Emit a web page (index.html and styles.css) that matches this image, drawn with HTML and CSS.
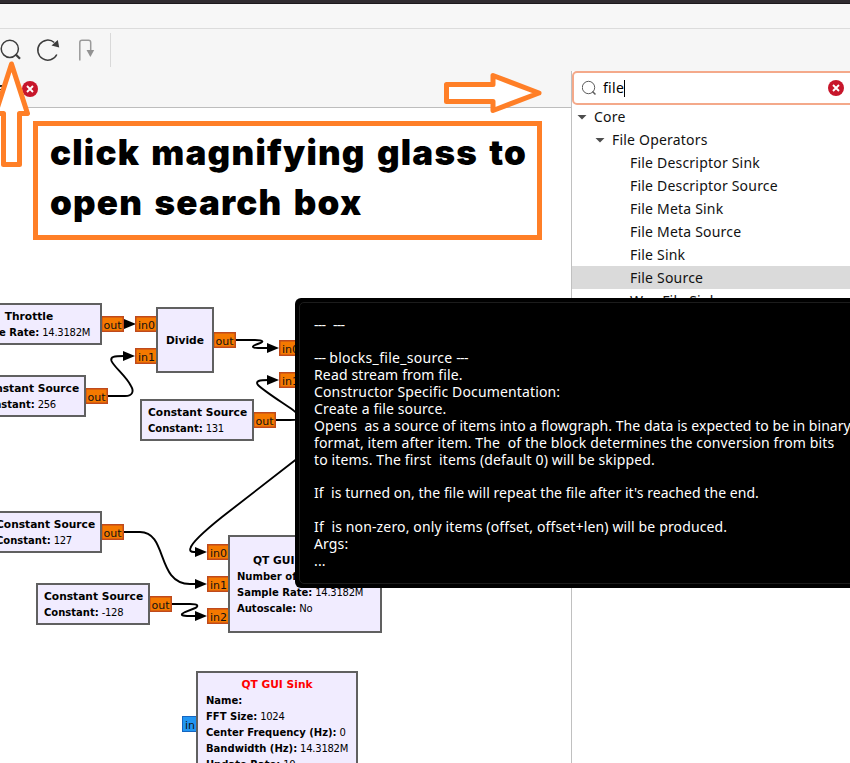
FILE: index.html
```
<!DOCTYPE html>
<html lang="en">
<head>
<meta charset="utf-8">
<title>GNU Radio Companion</title>
<link rel="stylesheet" href="styles.css">
</head>
<body>
<div class="window">
  <div class="titlebar"></div>
  <div class="menubar"></div>
  <div class="toolbar">
    <svg class="tools" width="110" height="42" viewBox="0 29 110 42" fill="none">
      <circle cx="9.8" cy="48.800" r="8.600" stroke="#3d3d3d" stroke-width="1.500"/>
      <path d="M15.500 54.200L20 58.800" stroke="#3d3d3d" stroke-width="2.200"/>
      <path d="M56.800 54.500A10 10 0 1 1 54.300 42.500" stroke="#3d3d3d" stroke-width="1.500"/>
      <path d="M57.800 40L59.200 47.500L51.500 45.500Z" fill="#3d3d3d"/>
      <path d="M79.800 60.500V42.500Q79.800 40.300 82 40.300H88.500Q90.700 40.300 90.700 42.500V52" stroke="#9a9a9a" stroke-width="1.500"/>
      <path d="M86.500 50H94.200L90.400 57Z" fill="#929292"/>
    </svg>
    <div class="separator"></div>
  </div>
  <div class="main">
    <section class="editor">
      <div class="tabs">
        <span class="tab-mark"></span>
        <svg class="close" width="16" height="16" viewBox="0 0 16 16"><circle cx="8" cy="8" r="8" fill="#c7162b"/><path d="M5 5l6 6M11 5l-6 6" stroke="#fff" stroke-width="1.900"/></svg>
      </div>
      <div class="canvas">
        <svg class="wires" width="571" height="655" viewBox="0 108 571 655">
          <g fill="none" stroke="#000" stroke-width="1.900">
            <path d="M124 324H130"/>
            <path d="M108 396H125C133 396 134 391 131 386C126 376 114 367 111.500 361C110 356.500 114 356 124 356"/>
            <path d="M236 340H255C264 340 264 342 259 343.500C251 346 251 348 258 348H269"/>
            <path d="M276 420H290C305 420 300 416 293 410C280 401 264 391 258 385C255 381 259 380 269 380"/>
            <path d="M124 532H140C168 532 156 584 190 584H197"/>
            <path d="M172 604H190C199 604 199 606.500 194 608.500L185 612C179 615 182 616 190 616H197"/>
            <path d="M296 459.500L222 517C202 533 192 543 190.500 548Q189 552 194 552H197"/>
          </g>
          <g fill="#000">
            <path d="M124 319L136 324L124 329Z"/>
            <path d="M123 351L135 356L123 361Z"/>
            <path d="M267 343L279 348L267 353Z"/>
            <path d="M267 375L279 380L267 385Z"/>
            <path d="M195 547L207 552L195 557Z"/>
            <path d="M195 579L207 584L195 589Z"/>
            <path d="M195 611L207 616L195 621Z"/>
          </g>
        </svg>

        <div class="port p1">out</div>
        <div class="port p2">in0</div>
        <div class="port p3">in1</div>
        <div class="port p4">out</div>
        <div class="port p5">out</div>
        <div class="port p6">out</div>
        <div class="port p7">in0</div>
        <div class="port p8">in1</div>
        <div class="port p9">out</div>
        <div class="port p10">in0</div>
        <div class="port p11">in1</div>
        <div class="port p12">in2</div>
        <div class="port p13">out</div>
        <div class="port blue p14">in</div>

        <div class="node throttle"><h3>Throttle</h3><p><b>Sample Rate:</b> 14.3182M</p></div>
        <div class="node c256"><h3>Constant Source</h3><p><b>Constant:</b> 256</p></div>
        <div class="node divide"><h3>Divide</h3></div>
        <div class="node c131"><h3>Constant Source</h3><p><b>Constant:</b> 131</p></div>
        <div class="node c127"><h3>Constant Source</h3><p><b>Constant:</b> 127</p></div>
        <div class="node c128"><h3>Constant Source</h3><p><b>Constant:</b> -128</p></div>
        <div class="node time"><h3>QT GUI Time Sink</h3><p><b>Number of Inputs:</b> 3</p><p><b>Sample Rate:</b> 14.3182M</p><p><b>Autoscale:</b> No</p></div>
        <div class="node sink"><h3>QT GUI Sink</h3><p><b>Name:</b></p><p><b>FFT Size:</b> 1024</p><p><b>Center Frequency (Hz):</b> 0</p><p><b>Bandwidth (Hz):</b> 14.3182M</p><p><b>Update Rate:</b> 10</p></div>
      </div>
    </section>
    <aside class="blocks">
      <div class="search">
        <svg width="16" height="16" viewBox="0 0 16 16" fill="none"><circle cx="6.500" cy="7.500" r="6.200" stroke="#5c5c5c"/><path d="M10.500 11.500l3 3" stroke="#5c5c5c" stroke-width="1.500"/></svg>
        <span class="query">file</span><i class="caret"></i>
        <svg class="clear" width="16" height="16" viewBox="0 0 16 16"><circle cx="8" cy="8" r="8" fill="#c7162b"/><path d="M5 5l6 6M11 5l-6 6" stroke="#fff" stroke-width="1.900"/></svg>
      </div>
      <ul class="tree">
        <li class="l1"><i class="arrow"></i>Core</li>
        <li class="l2"><i class="arrow"></i>File Operators</li>
        <li class="l3">File Descriptor Sink</li>
        <li class="l3">File Descriptor Source</li>
        <li class="l3">File Meta Sink</li>
        <li class="l3">File Meta Source</li>
        <li class="l3">File Sink</li>
        <li class="l3 selected">File Source</li>
        <li class="l3">Wav File Sink</li>
      </ul>
    </aside>
  </div>

  <div class="tooltip"><div class="doc">
    <p><span class="rule">---</span>  <span class="rule">---</span></p>
    <p></p>
    <p><span class="rule">---</span> <span class="name">blocks_file_source</span> <span class="rule">---</span></p>
    <p>Read stream from file.</p>
    <p>Constructor Specific Documentation:</p>
    <p>Create a file source.</p>
    <p class="tight">Opens  as a source of items into a flowgraph. The data is expected to be in binary</p>
    <p>format, item after item. The  of the block determines the conversion from bits</p>
    <p>to items. The first  items (default 0) will be skipped.</p>
    <p></p>
    <p class="tight">If  is turned on, the file will repeat the file after it's reached the end.</p>
    <p></p>
    <p>If  is non-zero, only items (offset, offset+len) will be produced.</p>
    <p>Args:</p>
    <p>...</p>
  </div></div>

  <div class="callout">click magnifying glass to<br>open search box</div>
  <svg class="arrows" width="571" height="200" viewBox="0 0 571 200" fill="#fff" stroke="#ff7f27" stroke-width="5" stroke-linejoin="round">
    <path d="M11.500 64L27.500 113.500H19.500V164.500H3.500V113.500H-4.500Z"/>
    <path d="M446.500 84.500H493V75.500L539 93L493 110.500V101.500H446.500Z"/>
  </svg>
</div>
</body>
</html>
```
FILE: styles.css
```
* { box-sizing: border-box; margin: 0; padding: 0; }
body { background: #fff; }
.window {
  position: relative;
  display: flex;
  flex-direction: column;
  width: 850px;
  height: 763px;
  overflow: hidden;
  font: 14px/23px "Noto Sans", sans-serif;
  color: #111;
}
.titlebar { height: 4px; background: #302c30; border-bottom: 1px solid #1c191c; }
.menubar { height: 25px; background: #f7f7f7; border-bottom: 1px solid #dcdcdc; }
.toolbar { display: flex; height: 42px; background: #f6f6f6; }
.separator { width: 1px; height: 34px; margin-top: 4px; background: #d9d9d9; }
.main { display: flex; flex: 1; min-height: 0; background: #f6f6f6; }

.editor { display: flex; flex: none; flex-direction: column; width: 571px; }
.tabs { display: flex; align-items: center; height: 37px; border-bottom: 1px solid #bdbdbd; }
.tab-mark { width: 3px; height: 5px; border-top: 2px solid #222; border-bottom: 1px solid #222; margin-top: -4px; }
.close { margin-left: 19px; }
.canvas { position: relative; flex: 1; overflow: hidden; background: #fff; font-family: "DejaVu Sans", sans-serif; }
.wires { position: absolute; left: 0; top: 0; }

.node {
  position: absolute;
  padding: 4px 6px 0;
  border: 2px solid #606060;
  background: #f1ecff;
  color: #000;
  line-height: 16px;
  white-space: nowrap;
}
.node h3 { font-size: 10.67px; text-align: center; }
.node p { font-size: 10px; letter-spacing: -0.25px; }
.node b { letter-spacing: 0; }
.throttle { left: -44px; top: 195px; width: 146px; height: 42px; }
.c256 { left: -28px; top: 267px; width: 114px; height: 42px; }
.divide { left: 156px; top: 199px; width: 58px; height: 66px; padding-top: 24px; }
.c131 { left: 140px; top: 291px; width: 114px; height: 42px; }
.c127 { left: -12px; top: 403px; width: 114px; height: 42px; }
.c128 { left: 36px; top: 475px; width: 114px; height: 42px; }
.time { left: 228px; top: 427px; width: 154px; height: 98px; padding: 16px 7px 0; }
.sink { left: 196px; top: 563px; width: 162px; height: 98px; padding: 4px 8px 0; }
.sink h3 { color: #f00; }

.port {
  position: absolute;
  width: 23px;
  height: 16px;
  padding-top: 1px;
  border: 1px solid #bf4a1c;
  box-shadow: inset 0 0 0 0.500px #bf4a1c;
  background: #f57900;
  color: #111;
  font-size: 11px;
  line-height: 15px;
  text-align: center;
}
.port.blue { width: 16px; background: #2196f3; border-color: #1565c0; box-shadow: none; }
.p1 { left: 101px; top: 208px; }
.p2 { left: 135px; top: 208px; }
.p3 { left: 135px; top: 240px; }
.p4 { left: 85px; top: 280px; }
.p5 { left: 213px; top: 224px; }
.p6 { left: 253px; top: 304px; }
.p7 { left: 279px; top: 232px; }
.p8 { left: 279px; top: 264px; }
.p9 { left: 101px; top: 416px; }
.p10 { left: 207px; top: 436px; }
.p11 { left: 207px; top: 468px; }
.p12 { left: 207px; top: 500px; }
.p13 { left: 149px; top: 488px; }
.p14 { left: 182px; top: 608px; }

.blocks { flex: none; width: 279px; border-left: 1px solid #c0c0c0; background: #fff; }
.search {
  display: flex;
  align-items: center;
  width: 290px;
  height: 34px;
  padding-left: 8px;
  border: 2px solid #f4a98a;
  border-radius: 5px;
  background: #fff;
}
.query { margin: -2px 0 0 5px; color: #000; letter-spacing: 0.300px; }
.caret { width: 1px; height: 17px; background: #000; }
.clear { margin-left: auto; margin-right: 16px; }
.tree { list-style: none; letter-spacing: 0.2px; }
.tree li { display: flex; align-items: center; height: 23px; padding-bottom: 1px; }
.arrow {
  width: 10px;
  height: 5px;
  margin: 2px 7px 0 0;
  background: #4d4d4d;
  clip-path: polygon(0 0, 100% 0, 50% 100%);
}
.tree .l1 { padding-left: 5px; }
.tree .l2 { padding-left: 23px; }
.tree .l3 { padding-left: 58px; }
.tree .selected { background: #dadada; }

.tooltip {
  position: absolute;
  left: 295px;
  top: 298px;
  width: 570px;
  height: 290px;
  padding: 4px;
  border-radius: 6px;
  background: #000;
}
.doc {
  display: flex;
  flex-direction: column;
  height: 282px;
  padding: 13.500px 14px;
  border: 1px solid #1c1c1c;
  border-radius: 5px;
  color: #fff;
  line-height: 16.900px;
  letter-spacing: 0.140px;
  white-space: pre;
}
.doc p { height: 16.900px; }
.doc .tight { letter-spacing: 0.050px; }
.doc .rule { letter-spacing: -0.700px; }
.doc .name { letter-spacing: 0.300px; }

.callout {
  position: absolute;
  left: 33px;
  top: 121px;
  width: 509px;
  height: 119px;
  padding: 1px 0 0 12px;
  border: 5px solid #ff7f27;
  background: #fff;
  color: #000;
  font: 900 35px/50px Inter, sans-serif;
  letter-spacing: 1.200px;
  word-spacing: 3px;
  white-space: nowrap;
}
.arrows { position: absolute; left: 0; top: 0; }
```
